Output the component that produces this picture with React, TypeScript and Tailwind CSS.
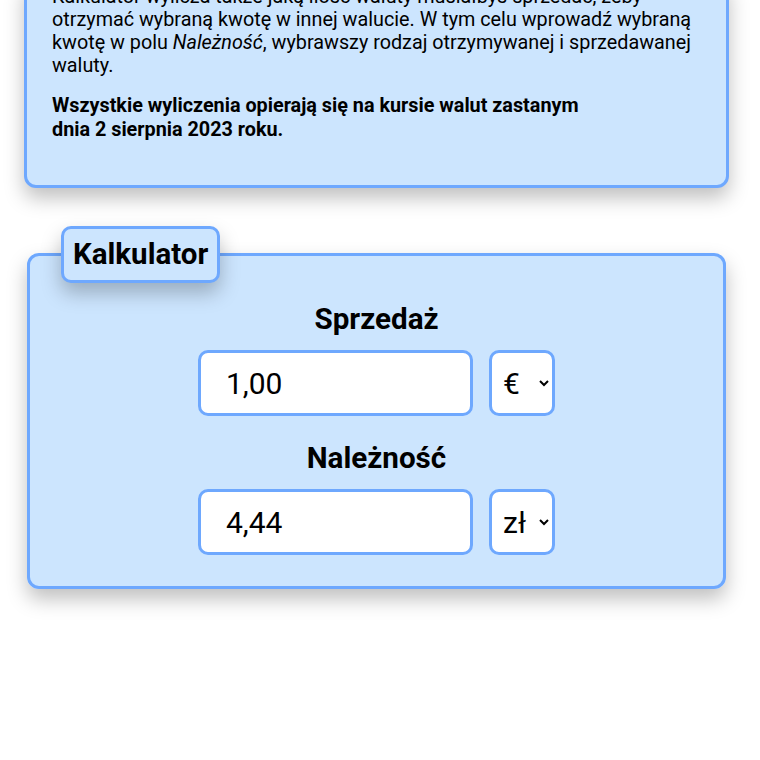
import React, { useState } from "react";

const card =
  "rounded-[12px] border-[3px] border-[#6ea8fe] bg-[#cce5fe] shadow-[0_10px_20px_rgba(0,0,0,0.25)]";

const Field = ({
  label,
  value,
  currency,
  options,
}: {
  label: string;
  value: string;
  currency: string;
  options: string[];
}) => {
  const [cur, setCur] = useState(currency);
  return (
    <div className="flex flex-col items-center">
      <h3 className="text-[29.6px] font-bold leading-[34px]">{label}</h3>
      <div className="mt-[14px] flex gap-[16px]">
        <input
          defaultValue={value}
          className="h-[66px] w-[275px] rounded-[10px] border-[3px] border-[#6ea8fe] bg-white pl-[25px] text-[30px] outline-none"
        />
        <select
          value={cur}
          onChange={(e) => setCur(e.target.value)}
          className="h-[66px] w-[66px] rounded-[10px] border-[3px] border-[#6ea8fe] bg-white pl-[7px] text-[30px] outline-none"
        >
          {options.map((o) => (
            <option key={o}>{o}</option>
          ))}
        </select>
      </div>
    </div>
  );
};

export default function App() {
  return (
    <div className="min-h-[760px] bg-white pb-[40px] font-['Roboto',sans-serif] text-black">
      {/* Info */}
      <div className={`ml-[24px] -mt-[22px] w-[705px] px-[25px] pb-[43px] pt-[4px] ${card}`}>
        <p className="text-[19.8px] leading-[23px]">
          Kalkulator wylicza także jaką ilość waluty musiałbyś sprzedać, żeby
          otrzymać wybraną kwotę w innej walucie. W tym celu wprowadź wybraną
          kwotę w polu <i>Należność</i>, wybrawszy rodzaj otrzymywanej i
          sprzedawanej waluty.
        </p>
        <p className="mt-[17px] text-[19.8px] font-bold leading-[24px]">
          Wszystkie wyliczenia opierają się na kursie walut zastanym
          <br />
          dnia 2 sierpnia 2023 roku.
        </p>
      </div>

      {/* Calculator */}
      <fieldset className={`ml-[27px] mt-[38px] w-[699px] pb-[31px] ${card}`}>
        <legend className="ml-[31px] rounded-[10px] border-[3px] border-[#6ea8fe] bg-[#cce5fe] px-[9px] text-[29.5px] font-bold leading-[51px] shadow-[0_10px_20px_rgba(0,0,0,0.25)]">
          Kalkulator
        </legend>
        <div className="mt-[19px] flex flex-col gap-[25px]">
          <Field label="Sprzedaż" value="1,00" currency="€" options={["€", "$", "zł"]} />
          <Field label="Należność" value="4,44" currency="zł" options={["zł", "€", "$"]} />
        </div>
      </fieldset>
    </div>
  );
}
